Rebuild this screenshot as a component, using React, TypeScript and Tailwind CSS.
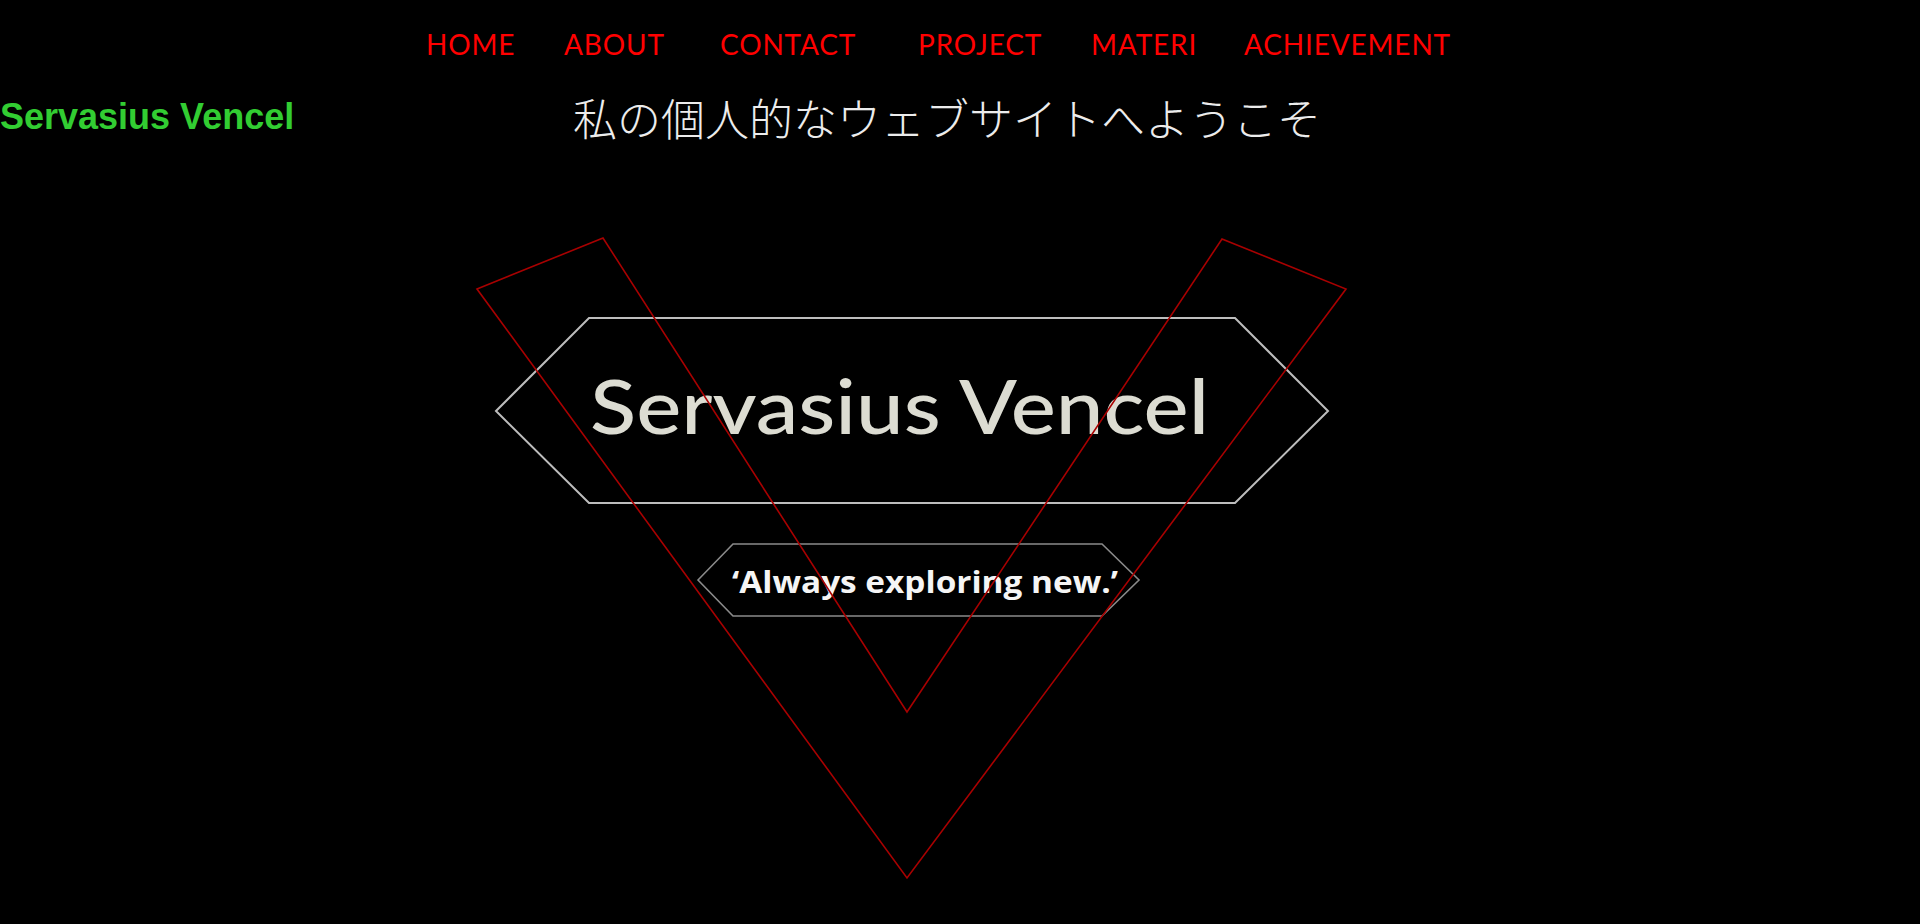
import React from 'react';

const navItems = [
    { label: 'HOME', width: 'w-[138px]' },
    { label: 'ABOUT', width: 'w-[156px]' },
    { label: 'CONTACT', width: 'w-[198px]' },
    { label: 'PROJECT', width: 'w-[173px]' },
    { label: 'MATERI', width: 'w-[153px]' },
    { label: 'ACHIEVEMENT', width: 'w-auto' },
];

function HeroLogo() {
    return (
        <svg width="885" height="660" viewBox="470 230 885 660" className="block">
            {/* outer hexagon */}
            <polygon
                points="496,411 589,318 1235,318 1328,411 1235,503 589,503"
                fill="none"
                stroke="#bdbdbd"
                strokeWidth="2"
            />
            <text
                x="590"
                y="434"
                textLength="619"
                lengthAdjust="spacingAndGlyphs"
                fill="#dcdcd2"
                fontSize="76"
                fontWeight="500"
                fontFamily="Lato, 'Open Sans', sans-serif"
            >
                Servasius Vencel
            </text>

            {/* tagline hexagon */}
            <polygon
                points="698,580 733,544 1102,544 1139,580 1102,616 733,616"
                fill="none"
                stroke="#8a8a8a"
                strokeWidth="1.6"
            />
            <text
                x="732"
                y="593"
                textLength="386"
                lengthAdjust="spacingAndGlyphs"
                fill="#f5f5f5"
                fontSize="31"
                fontWeight="700"
                fontFamily="'Open Sans', 'Noto Sans', sans-serif"
            >
                ‘Always exploring new.’
            </text>

            {/* red V */}
            <polygon
                points="477,289 603,238 907,712 1222,239 1346,289 907,878"
                fill="none"
                stroke="#a80000"
                strokeWidth="1.6"
                strokeLinejoin="miter"
            />
        </svg>
    );
}

export default function App() {
    return (
        <div className="min-h-screen w-full bg-black overflow-hidden">
            {/* Nav */}
            <nav className="flex items-center h-[72px] pt-[18px] pl-[426px]">
                {navItems.map(item => (
                    <div key={item.label} className={`${item.width} shrink-0`}>
                        <a
                            href="#"
                            className="text-[#ff0000] text-[28px] leading-none font-['Lato',sans-serif] tracking-[0.03em]"
                        >
                            {item.label}
                        </a>
                    </div>
                ))}
            </nav>

            {/* Title row */}
            <div className="flex items-center h-[90px]">
                <div className="w-[573px] shrink-0 text-[36px] font-bold leading-none text-[#32cd32] font-['Liberation_Sans',Arial,sans-serif]">
                    Servasius Vencel
                </div>
                <div className="text-[44px] leading-none font-light text-[#ececec] font-['Noto_Sans_CJK_JP',sans-serif]">
                    私の個人的なウェブサイトへようこそ
                </div>
            </div>

            {/* Hero */}
            <div className="pl-[470px] pt-[68px]">
                <HeroLogo />
            </div>
        </div>
    );
}
